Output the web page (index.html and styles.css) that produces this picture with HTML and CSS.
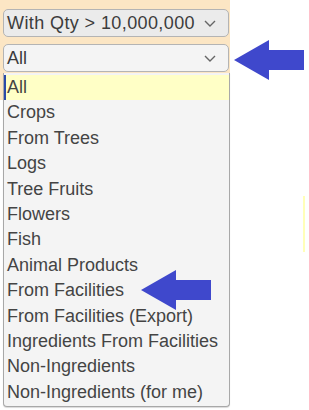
FILE: index.html
```html
<!DOCTYPE html>
<html lang="en">
<head>
    <meta charset="UTF-8">
    <meta name="viewport" content="width=device-width, initial-scale=1.0">
    <title>Filter</title>
    <link rel="stylesheet" href="styles.css">
</head>
<body>
    <div class="panel">
        <!-- quantity filter -->
        <div class="select qty">
            <span>With Qty &gt; 10,000,000</span>
            <svg class="chev" width="12" height="7" viewBox="0 0 12 7"><path d="M1 1 L6 6 L11 1" fill="none" stroke="#666" stroke-width="1.4"/></svg>
        </div>

        <!-- category filter -->
        <div class="select cat">
            <span>All</span>
            <svg class="chev" width="12" height="7" viewBox="0 0 12 7"><path d="M1 1 L6 6 L11 1" fill="none" stroke="#666" stroke-width="1.4"/></svg>
        </div>

        <ul class="dropdown">
            <li class="active">All</li>
            <li>Crops</li>
            <li>From Trees</li>
            <li>Logs</li>
            <li>Tree Fruits</li>
            <li>Flowers</li>
            <li>Fish</li>
            <li>Animal Products</li>
            <li>From Facilities</li>
            <li>From Facilities (Export)</li>
            <li>Ingredients From Facilities</li>
            <li>Non-Ingredients</li>
            <li>Non-Ingredients (for me)</li>
        </ul>
    </div>

    <div class="strip"></div>

    <!-- arrows drawn on top -->
    <svg class="arrow arrow-top" width="72" height="42" viewBox="0 0 72 42"><path d="M0 20 L35 0 L35 10 L70 10 L70 30 L35 30 L35 40 Z" fill="#3f48cc"/></svg>
    <svg class="arrow arrow-mid" width="72" height="42" viewBox="0 0 72 42"><path d="M0 20 L35 0 L35 10 L70 10 L70 30 L35 30 L35 40 Z" fill="#3f48cc"/></svg>
</body>
</html>
```

FILE: styles.css
```css
* {
    margin: 0;
    padding: 0;
    box-sizing: border-box;
}

body {
    font-family: 'Liberation Sans', Arial, sans-serif;
    background: #ffffff;
    width: 309px;
    height: 410px;
    overflow: hidden;
    position: relative;
}

.panel {
    position: relative;
    width: 230px;
    height: 100px;
    background: #fce6c4;
    padding: 9px 1px 0 3px;
}

.select {
    display: flex;
    align-items: center;
    justify-content: space-between;
    height: 28px;
    padding: 0 12px 0 3px;
    border: 1px solid #b4b4b4;
    border-radius: 5px;
    color: #3c3c3c;
    font-size: 18px;
}

.qty {
    background: #ebebeb;
    margin-bottom: 7px;
    letter-spacing: 0.4px;
}

.cat {
    background: #f4f4f4;
}

.chev {
    display: block;
}

.dropdown {
    position: absolute;
    top: 73px;
    left: 3px;
    width: 227px;
    list-style: none;
    background: #f4f4f4;
    border: 1px solid #a8a8a8;
    border-top: none;
    border-radius: 0 0 4px 4px;
    padding: 2px 0 1px;
    box-shadow: 0 1px 1px rgba(0, 0, 0, 0.15);
}

.dropdown li {
    height: 25.4px;
    line-height: 25.4px;
    padding-left: 3px;
    font-size: 18px;
    color: #444;
    white-space: nowrap;
}

.dropdown li.active {
    background: #ffffc6;
    border-left: 2px solid #2a4aa8;
    padding-left: 1px;
}

.strip {
    position: absolute;
    left: 303px;
    top: 196px;
    width: 2px;
    height: 56px;
    background: #ffffb8;
}

.arrow {
    position: absolute;
}

.arrow-top {
    left: 234px;
    top: 40px;
}

.arrow-mid {
    left: 141px;
    top: 270px;
}
```
